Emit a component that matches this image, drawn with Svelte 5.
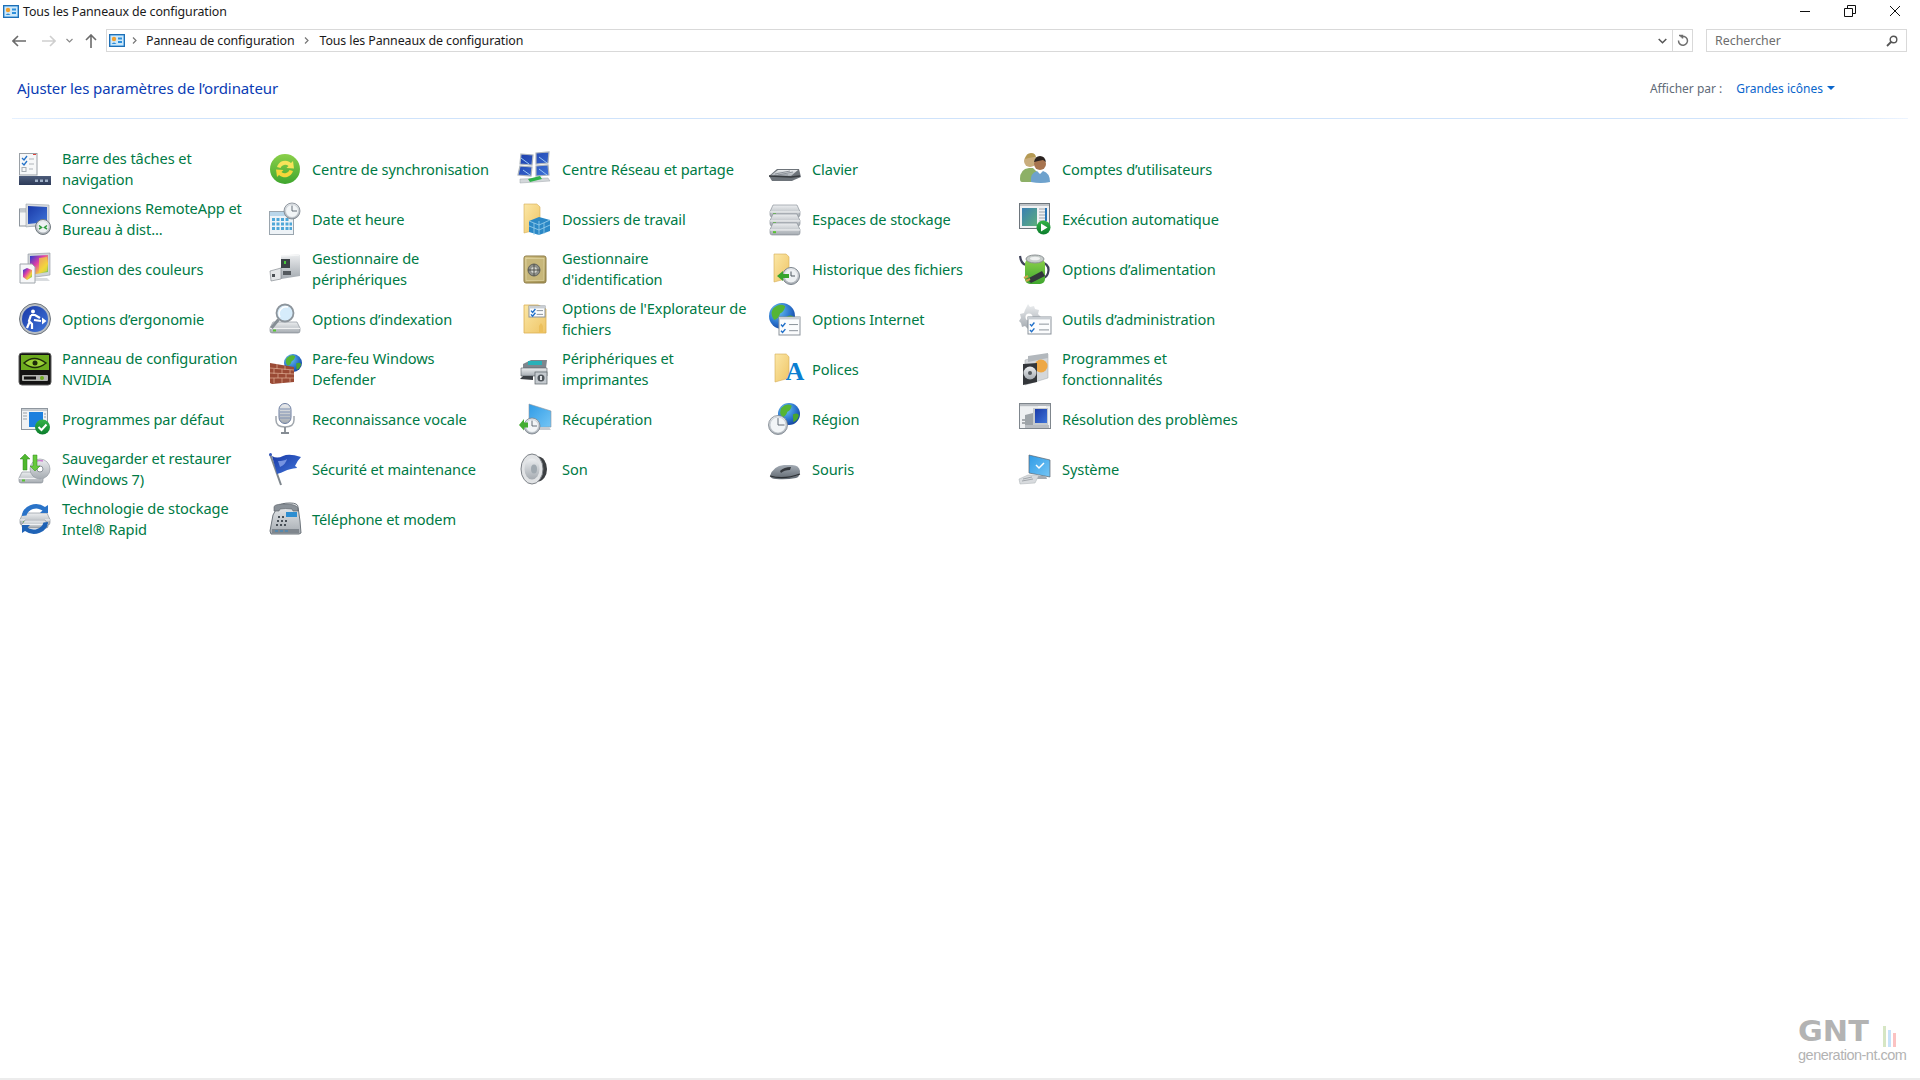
<script>
    // small svg pieces reused between icons
    const clock = (x, y, r) => `<circle cx="${x}" cy="${y}" r="${r}" fill="url(#steel)" stroke="#78828c" stroke-width=".8"/><circle cx="${x}" cy="${y}" r="${r - 1.6}" fill="#f2f5f7" stroke="#b4bcc4" stroke-width=".5"/><path d="M${x} ${y - r + 2.6}V${y}H${x + r - 3}" fill="none" stroke="#55606a" stroke-width=".9"/>`;
    const globe = (x, y, r) => `<circle cx="${x}" cy="${y}" r="${r}" fill="url(#earth)"/><path d="M${x - r * 0.7} ${y - r * 0.55}q${r * 0.5} ${-r * 0.5} ${r * 0.95} ${-r * 0.2}q${-r * 0.1} ${r * 0.45} ${-r * 0.4} ${r * 0.55}q${-r * 0.1} ${r * 0.4} ${-r * 0.45} ${r * 0.5}q${-r * 0.35} ${-r * 0.4} ${-r * 0.1} ${-r * 0.85}z" fill="#55b534"/><path d="M${x + r * 0.35} ${y + r * 0.05}q${r * 0.4} ${-r * 0.2} ${r * 0.55} ${r * 0.05}q${-r * 0.1} ${r * 0.5} ${-r * 0.5} ${r * 0.65}z" fill="#4aa52e"/>`;
    const checklist = (x, y, w, h) => `<rect x="${x}" y="${y}" width="${w}" height="${h}" fill="#fbfcfd" stroke="#8b939b"/><rect x="${x}" y="${y}" width="${w}" height="2.4" fill="#c9ced3"/><path d="M${x + 2} ${y + h * 0.42}l1.6 1.8 2.8-3.4M${x + 2} ${y + h * 0.76}l1.6 1.8 2.8-3.4" fill="none" stroke="#1f6fc9" stroke-width="1.4"/><path d="M${x + w * 0.48} ${y + h * 0.42}H${x + w - 2}M${x + w * 0.48} ${y + h * 0.76}H${x + w - 2}" stroke="#8b939b"/>`;
    const folder = (x, y, w, h) => `<path d="M${x} ${y}h${w * 0.8}l${w * 0.2} ${h * 0.1}V${y + h * 0.86}L${x} ${y + h}z" fill="url(#manila)" stroke="#d5ad55" stroke-width=".6"/>`;
    const drive = (x, y, w, h) => `<path d="M${x + 3} ${y}h${w - 6}l3 ${h * 0.55}v${h * 0.25}q0 ${h * 0.2} -2 ${h * 0.2}h${-w + 4}q-2 0 -2 ${-h * 0.2}v${-h * 0.25}z" fill="url(#steel)" stroke="#7c858d" stroke-width=".6"/><path d="M${x} ${y + h * 0.58}h${w}" stroke="#f6f7f8"/><rect x="${x + 3}" y="${y + h * 0.68}" width="3" height="2" fill="#58c334"/>`;

    const icons = {
        taskbar: `<rect x=".5" y=".5" width="17.5" height="21.5" fill="#f7f8f9" stroke="#9aa0a6"/><rect x="14" y="1" width="3" height="1" fill="#e0433a"/><path d="M3 5l2 2 3-4M3 10l2 2 3-4" fill="none" stroke="#2472c8" stroke-width="1.3"/><path d="M10 6h5M10 11h5M10 16h4" stroke="#b0b5ba"/><rect x="3" y="14.5" width="4" height="4" fill="none" stroke="#a7adb3"/><rect y="23" width="32" height="9" fill="url(#navy)"/><path d="M16 26.5h3v2.5h-3zM21 26.5h3v2.5h-3zM26 26.5h3v2.5h-3z" fill="#9fb0c8"/>`,
        sync: `<circle cx="16" cy="16" r="15" fill="url(#lime)"/><path d="M8 14a8.500 8.500 0 0 1 14-4l2-2 1 7.500-7.500-.5 2-2a5 5 0 0 0-8 2z" fill="#f6e35a"/><path d="M24 18a8.500 8.500 0 0 1-14 4l-2 2-1-7.500 7.500.5-2 2a5 5 0 0 0 8-2z" fill="#f6d63a"/>`,
        remote: `<rect x=".5" y="6" width="15" height="17" fill="#f5f6f7" stroke="#8e969e"/><rect x="1" y="6.500" width="14" height="3" fill="#c4c9ce"/><path d="M7 1l23 1v19l-23 3z" fill="#d7dbdf" stroke="#9ba2a9" stroke-width=".6"/><path d="M9 3l19 1v15l-19 2z" fill="url(#royal)"/><circle cx="24" cy="24" r="7.500" fill="url(#steel)" stroke="#70797f"/><circle cx="24" cy="24" r="5.500" fill="#eef1f3"/><path d="M20 22.500l2.500 2-2.500 1.500M28 22.500l-2.500 2 2.500 1.500" fill="none" stroke="#2f9c3d" stroke-width="1.5"/>`,
        colors: `<path d="M9 1l22-1v22l-22 3z" fill="#cfd3d7" stroke="#8f969d" stroke-width=".6"/><path d="M11 3l18-1v17l-18 3z" fill="url(#rainbow)"/><path d="M20 5l8-1v14l-8 2z" fill="#f4d83c" opacity=".7"/><path d="M14 25h14l3 3h-17z" fill="#d9dcdf"/><path d="M1 11h12l3 3v16h-15z" fill="#f6f7f8" stroke="#a0a6ac"/><path d="M4 17l4-2 5 2v7l-5 3-4-3z" fill="url(#rainbow)"/>`,
        date: `<rect x=".5" y="8.500" width="24" height="23" fill="#eef3f7" stroke="#9aa5ae"/><rect x="1" y="9" width="23" height="4" fill="#b9d6ea"/><path d="M3 15h3v3h-3zM7.500 15h3v3h-3zM12 15h3v3h-3zM16.500 15h3v3h-3zM3 19.500h3v3h-3zM7.500 19.500h3v3h-3zM12 19.500h3v3h-3zM16.500 19.500h3v3h-3zM20.500 19.500h2.500v3h-2.500zM3 24h3v3h-3zM7.500 24h3v3h-3zM12 24h3v3h-3zM16.500 24h3v3h-3zM20.500 24h2.500v3h-2.500z" fill="#4fa7d8"/>${clock(23, 8, 8)}`,
        devices: `<path d="M12 3l17-2 2 1v21l-19 3z" fill="url(#steel)"/><path d="M12 3l18-1" stroke="#f5f6f7" stroke-width="1.5"/><rect x="12" y="6" width="9" height="9" fill="#3c4246"/><rect x="15" y="8" width="2" height="3" fill="#47c93a"/><path d="M1 18l11-3v11l-10 2z" fill="#e4e6e8" stroke="#777e85" stroke-width=".6"/><rect x="3" y="21" width="3" height="3" fill="#4a4f54"/><rect x="14" y="18" width="8" height="4" fill="#54595e"/>`,
        access: `<circle cx="16" cy="16" r="15.500" fill="#b8bec4" stroke="#6f767d"/><circle cx="16" cy="16" r="13" fill="url(#royal)"/><circle cx="14" cy="8.500" r="2" fill="#fff"/><path d="M12 12h4l5 3M12 12l-2 6 3 3v5M11 18l-3 7M15 17l7 1" fill="none" stroke="#fff" stroke-width="2.200"/><path d="M23 14.500l4.500 3.500-4.500 3.500z" fill="#fff"/>`,
        index: `${drive(1, 19, 30, 11)}<circle cx="16" cy="10" r="8.500" fill="#d6ecfb" stroke="#8d959c" stroke-width="1.800"/><path d="M11 14a7 7 0 0 1 8-10" fill="none" stroke="#fff" stroke-width="1.500"/><path d="M9.500 16.500L2.500 25" stroke="#868e95" stroke-width="3"/>`,
        nvidia: `<rect width="32" height="32" rx="3" fill="#131313" stroke="#5c5c5c"/><path d="M2 2h28v15h-28z" fill="#6dab1e"/><path d="M5 10q10-9 22 0-11 9-22 0z" fill="#9ad036" stroke="#1d2a0a" stroke-width="1.500"/><circle cx="16" cy="10" r="2.500" fill="#1d2a0a"/><rect x="3" y="22" width="26" height="6" rx="1" fill="#b2b4b0"/><rect x="5" y="23.500" width="12" height="3" fill="#111"/><circle cx="23" cy="25" r="2" fill="#6dab1e"/>`,
        firewall: `${globe(24, 10, 9)}<path d="M1 10l24 4v15l-22 2-2-1z" fill="#9a4a35"/><path d="M1 15l24 2M1 20l24 1M1 25l24 0M8 11v5M16 13v4M5 16v5M13 16v5M21 17v4M9 21v4M17 21v4M5 25v5M13 25v5M21 25v4" stroke="#d9a68e" stroke-width=".8" fill="none"/>`,
        defaults: `<rect x="2.500" y="5.500" width="26" height="21" fill="#f0f2f4" stroke="#8f979f"/><rect x="3" y="6" width="25" height="2" fill="#c7ccd1"/><rect x="10" y="9" width="14" height="15" fill="#1c7fde"/><path d="M4 10h4M4 13h4M4 16h4M25 11h2M25 14h2" stroke="#9aa1a7"/><circle cx="23.500" cy="24" r="7.500" fill="url(#emerald)"/><path d="M19.500 24l3 3 5-5.500" fill="none" stroke="#fff" stroke-width="2"/>`,
        mic: `<rect x="10" y=".5" width="12" height="20" rx="6" fill="url(#steel)" stroke="#6b7da0"/><path d="M11 6h10M11 9h10M11 12h10M11 15h10" stroke="#7f90b3"/><path d="M7 13v4q0 7 9 7t9-7v-4" fill="none" stroke="#a1a7ad" stroke-width="1.500"/><path d="M16 24v5M12 30h8" stroke="#858c93" stroke-width="1.800"/>`,
        backup: `${drive(0, 19, 24, 11)}<circle cx="21" cy="16" r="10" fill="url(#steel)" stroke="#8a9198" stroke-width=".6"/><circle cx="21" cy="16" r="3" fill="#fff" stroke="#8a9198"/><path d="M16 9a9 9 0 0 1 8-1" stroke="#cc7fcf" stroke-width="1.500" fill="none"/><path d="M6 1l5 5h-3v11h-4v-11h-3z" fill="#4fb82e" stroke="#2e8a1e" stroke-width=".5"/><path d="M16 18l-5-5h3v-11h4v11h3z" fill="#67c93c" stroke="#2e8a1e" stroke-width=".5"/>`,
        intel: `${drive(1, 10, 30, 12)}${drive(3, 17, 26, 8)}<path d="M3 13a14 12 0 0 1 23-9l3-2v8h-8l2.500-2.500a10 9 0 0 0-16 5z" fill="#2a73c8"/><path d="M29 19a14 12 0 0 1-23 9l-3 2v-8h8l-2.500 2.500a10 9 0 0 0 16-5z" fill="#1f63b6"/>`,
        network: `<path d="M2 1l12 1-1 10-12-1zM17 0l13-1-1 11-12 1zM1 13l12 1-1 9-13-1zM17 13l12-1 1 10-13 1z" fill="url(#royal)" stroke="#aeb5bc" stroke-width="1.200"/><path d="M2 5l8 6M20 4l8 6M4 17l7 5M20 16l8 6" stroke="#9ac8f5" stroke-width="1"/><path d="M1 26l28-1 2 3-30 2z" fill="#d3d7da" stroke="#9ea5ab" stroke-width=".5"/><path d="M9 26l12-3 2 3-12 3z" fill="#2fb24a"/>`,
        keyboard: `<path d="M0 23l8-7h22l2 8-7 3-2 1h-20z" fill="#6e747a"/><path d="M1 23l8-6h20l-7 6z" fill="url(#steel)"/><path d="M6 21l15-3M9 22l15-3M5 22.500l14-.5" stroke="#8c9299"/><path d="M0 23l22 1 9-1" stroke="#383c40" stroke-width="1.500" fill="none"/>`,
        work: `${folder(5, 1, 16, 29)}<path d="M10 18l10-4 11 3v11l-11 4-10-3z" fill="#2b88c6"/><path d="M20 18v14M10 18l10 4 11-5M10 23l10 4 11-5M15 20v12M25 20v11" stroke="#9ad0ee" stroke-width=".8" fill="none"/>`,
        storage: `${drive(1, 2, 30, 12)}${drive(1, 11, 30, 12)}${drive(1, 20, 30, 12)}`,
        safe: `<rect x="5" y="3" width="22" height="27" rx="2" fill="url(#brass)" stroke="#8c7a45"/><rect x="7" y="5.500" width="18" height="22" fill="#c7b77a" stroke="#e7dcae" stroke-width=".6"/><circle cx="15" cy="17" r="6" fill="#8e908a" stroke="#5f6059"/><circle cx="15" cy="17" r="3" fill="#d7d8d2"/><path d="M15 11v12M9 17h12" stroke="#4f504b"/>`,
        history: `${folder(5, 1, 15, 28)}<circle cx="22" cy="23" r="8.500" fill="url(#steel)" stroke="#7a838b"/><circle cx="22" cy="23" r="6.500" fill="#eef1f3"/><path d="M22 18.500v4.500h4" fill="none" stroke="#4d565e"/><path d="M8 23l6-5v3h6v4h-6v3z" fill="#37a52e"/>`,
        explorer: `<path d="M5 2h14l8 4v24h-22z" fill="url(#manila)" stroke="#dcb054" stroke-width=".8"/><path d="M20 30v-7l2-3 2 3v7z" fill="#ecc05c"/>${checklist(10, 3, 16, 11)}`,
        internet: `${globe(13, 13, 13)}${checklist(10, 14, 21, 18)}`,
        fonts: `${folder(6, 1, 14, 28)}<text x="26" y="27" text-anchor="middle" font-family="'Liberation Serif',serif" font-weight="700" font-size="26" fill="#0b7fd1">A</text>`,
        region: `${globe(20, 11, 11)}${clock(9, 22, 9.500)}`,
        speaker: `<ellipse cx="19" cy="16" rx="9" ry="12.500" fill="#3b3e41"/><ellipse cx="13" cy="16" rx="11" ry="15" fill="#e1e3e5" stroke="#7c8187"/><ellipse cx="13" cy="16" rx="7.500" ry="10.500" fill="url(#steel)"/><ellipse cx="15" cy="16" rx="3" ry="4.500" fill="#a0a9b0"/>`,
        mouse: `<path d="M1 23q3-10 14-11h8q7 0 8 6 0 6-4 7-10 2-20 1-5 0-6-3z" fill="url(#slate)"/><path d="M11 18q4-4 11-4l-1 3q-6 0-9 3z" fill="#34383d"/><path d="M1 23q14 4 30-2" stroke="#2d3135" stroke-width="1.200" fill="none"/>`,
        printers: `<path d="M4 11l8-4h16l-1 8h-23z" fill="#7e868d"/><path d="M9 8h14v4h-14z" fill="#28b0b8"/><path d="M2 15h26v8h-26z" fill="url(#steel)" stroke="#555c62" stroke-width=".6"/><path d="M4 23l-3 3 13 1v-4z" fill="#3b3f44"/><rect x="16" y="19" width="12" height="12" fill="#c4c9ce" stroke="#5a6167" stroke-width=".7"/><circle cx="22" cy="25" r="3.500" fill="#4f555b"/><rect x="21" y="23" width="2" height="4" fill="#dfe2e4"/>`,
        recovery: `<path d="M10 1l22 7v16l-22 1z" fill="url(#sky)" stroke="#8d969d" stroke-width=".6"/><path d="M20 24h10l2 3h-12z" fill="#c7cbd0"/>${clock(13, 23, 8)}<path d="M0 22l5-6v3.500h4v5h-4v3z" fill="#43ad31"/>`,
        trouble: `<rect x=".5" y=".5" width="31" height="25" fill="#eef0f2" stroke="#7f868d"/><rect x="1" y="1" width="30" height="2.200" fill="#b8bcc1"/><path d="M19 3h8v3h-8z" fill="#f4f5f6"/><path d="M14 5l15 0v17h-15z" fill="#c6cacd"/><path d="M16 6h12v14h-12z" fill="url(#royal)"/><path d="M6 12l8-2v14h-8z" fill="#9da3a8"/><path d="M3 17h3M3 20h3" stroke="#60666c"/><path d="M6 22h24v3h-24z" fill="#b9bdc2"/>`,
        flag: `<path d="M1 1l11 31" stroke="#7e868d" stroke-width="2"/><circle cx="1.500" cy="1.500" r="1.500" fill="#3458c0"/><path d="M3 3q5 3 11 0t18 1q-4 4-6 9 2 1 2 2-8 1-12 3t-8 3z" fill="url(#royal)"/><path d="M9 8q6 0 9-2-1 5-7 8z" fill="#8aa5ea" opacity=".8"/>`,
        users: `<circle cx="11" cy="8" r="6" fill="#c9ad7d"/><path d="M6 6q1-6 6-6t5 5l-2-1q-6 1-9 2z" fill="#b59a54"/><path d="M1 26q0-10 9-11h4l4 4v10l-15 0q-2 0-2-3z" fill="#8db067"/><circle cx="21" cy="11" r="6" fill="#a7744f"/><path d="M15 9q1-6 6-6t6 6l-3-2q-5 1-9 2z" fill="#2b2320"/><path d="M12 29q-1-9 6-11l3 3 3-3q7 2 7 11-9 2-19 0z" fill="#6ea2cd"/>`,
        autoplay: `<rect x=".5" y=".5" width="30" height="25" fill="#f0f1f3" stroke="#6d757c"/><rect x="1" y="1" width="29" height="2" fill="#bfc3c7"/><rect x="3" y="5" width="15" height="18" fill="url(#teal)"/><path d="M20 6h6M20 9h6M20 12h6M20 15h6M20 18h6" stroke="#9ea4aa"/><rect x="26" y="5" width="2" height="13" fill="#2775b8"/><circle cx="24.500" cy="24.500" r="7" fill="url(#emerald)"/><path d="M22 20.500l6.500 4-6.500 4z" fill="#fff"/>`,
        power: `<path d="M1 3q1 8 6 9M25 10q6 3 4 10-1 4-5 5" fill="none" stroke="#3e4158" stroke-width="2.200"/><rect x="6" y="6" width="20" height="25" rx="5" fill="url(#lime)"/><ellipse cx="16" cy="6" rx="9" ry="4" fill="#c6ccca" stroke="#8c9294"/><ellipse cx="16" cy="5.500" rx="5" ry="1.800" fill="#eff1f1"/><path d="M8 26l15-8 3 5-14 7z" fill="#33373b"/><path d="M5 25l4-2M7 28l4-2" stroke="#c9a34a" stroke-width="2"/>`,
        admin: `<path d="M9 1l2 3 4-1 1 3 4 1-1 4 3 3-3 3 1 4-4 1-1 3-4-1-2 2-3-3-3 1-1-4-2-2 2-3-1-4 4-1 1-3z" fill="url(#steel)"/><circle cx="10" cy="14" r="3.500" fill="#fff"/>${checklist(9, 14, 23, 17)}`,
        programs: `<path d="M6 7l23-6v24l-23 7z" fill="#d4d7da" stroke="#a0a6ab" stroke-width=".5"/><path d="M9 3l20-3v5l-20 4z" fill="#b3b8bd"/><circle cx="22" cy="13" r="6.500" fill="#eea846"/><path d="M4 11l14-1v19l-14 3z" fill="#33363a"/><circle cx="11" cy="20" r="6.500" fill="url(#steel)"/><circle cx="11" cy="20" r="2" fill="#54595e"/>`,
        system: `<path d="M10 2l21 5v17l-21-4z" fill="url(#sky)" stroke="#5c6670" stroke-width=".7"/><path d="M17 12l3 3 5-5" fill="none" stroke="#fff" stroke-width="1.500"/><path d="M19 23l-1 3h10l-1-3z" fill="#a6acb2"/><path d="M0 26l9-4h11l-4 8-15 1z" fill="#d8dbde" stroke="#a9aeb3" stroke-width=".5"/><path d="M4 26l9-2M3 28l11-2" stroke="#a2a7ac"/>`,
        phone: `<path d="M4 12l5-9q3-3 12-3 8 0 8 4l2 14 1 12-2 1h-28l-1-3z" fill="url(#steel)" stroke="#6d747b"/><path d="M5 4q0-3 11-3t13 4v3h-5l-1-2q-7-1-12 0l-1 2h-5z" fill="#8a9198" stroke="#596067" stroke-width=".6"/><rect x="17" y="9" width="11" height="5" fill="#2e8ed1"/><path d="M9 13h2v2h-2zM13 13h2v2h-2zM8 17h2v2h-2zM12 17h2v2h-2zM16 17h2v2h-2zM7 21h2v2h-2zM11 21h2v2h-2zM15 21h2v2h-2z" fill="#495057"/><path d="M3 26h27v4h-27z" fill="#7f868d"/><path d="M6 28h3M11 28h3M16 28h3" stroke="#2d89cc"/>`,
    };

    const items = [
        ['taskbar', 'Barre des tâches et\nnavigation'], ['sync', 'Centre de synchronisation'], ['network', 'Centre Réseau et partage'], ['keyboard', 'Clavier'], ['users', 'Comptes d’utilisateurs'],
        ['remote', 'Connexions RemoteApp et\nBureau à dist...'], ['date', 'Date et heure'], ['work', 'Dossiers de travail'], ['storage', 'Espaces de stockage'], ['autoplay', 'Exécution automatique'],
        ['colors', 'Gestion des couleurs'], ['devices', 'Gestionnaire de\npériphériques'], ['safe', "Gestionnaire\nd'identification"], ['history', 'Historique des fichiers'], ['power', 'Options d’alimentation'],
        ['access', 'Options d’ergonomie'], ['index', 'Options d’indexation'], ['explorer', "Options de l'Explorateur de\nfichiers"], ['internet', 'Options Internet'], ['admin', 'Outils d’administration'],
        ['nvidia', 'Panneau de configuration\nNVIDIA'], ['firewall', 'Pare-feu Windows\nDefender'], ['printers', 'Périphériques et\nimprimantes'], ['fonts', 'Polices'], ['programs', 'Programmes et\nfonctionnalités'],
        ['defaults', 'Programmes par défaut'], ['mic', 'Reconnaissance vocale'], ['recovery', 'Récupération'], ['region', 'Région'], ['trouble', 'Résolution des problèmes'],
        ['backup', 'Sauvegarder et restaurer\n(Windows 7)'], ['flag', 'Sécurité et maintenance'], ['speaker', 'Son'], ['mouse', 'Souris'], ['system', 'Système'],
        ['intel', 'Technologie de stockage\nIntel® Rapid'], ['phone', 'Téléphone et modem'],
    ];
</script>

<svg class="defs" width="0" height="0" aria-hidden="true">
    <defs>
        <linearGradient id="steel" x1="0" y1="0" x2="0" y2="1"><stop offset="0" stop-color="#eceef0"/><stop offset="1" stop-color="#a5abb1"/></linearGradient>
        <linearGradient id="navy" x1="0" y1="0" x2="0" y2="1"><stop offset="0" stop-color="#4d5c7a"/><stop offset="1" stop-color="#2c3a58"/></linearGradient>
        <linearGradient id="royal" x1="0" y1="0" x2="1" y2="1"><stop offset="0" stop-color="#1a3aa8"/><stop offset="1" stop-color="#3f74d8"/></linearGradient>
        <linearGradient id="sky" x1="0" y1="0" x2="1" y2="1"><stop offset="0" stop-color="#2f9be6"/><stop offset="1" stop-color="#76c6f5"/></linearGradient>
        <linearGradient id="teal" x1="0" y1="0" x2="1" y2="1"><stop offset="0" stop-color="#3a7fb3"/><stop offset="1" stop-color="#5cae7c"/></linearGradient>
        <linearGradient id="lime" x1="0" y1="0" x2="0" y2="1"><stop offset="0" stop-color="#8bd04a"/><stop offset="1" stop-color="#3fa62e"/></linearGradient>
        <linearGradient id="emerald" x1="0" y1="0" x2="0" y2="1"><stop offset="0" stop-color="#35b348"/><stop offset="1" stop-color="#0b7d2c"/></linearGradient>
        <linearGradient id="manila" x1="0" y1="0" x2="1" y2="1"><stop offset="0" stop-color="#fbe7a6"/><stop offset="1" stop-color="#efc566"/></linearGradient>
        <linearGradient id="brass" x1="0" y1="0" x2="1" y2="1"><stop offset="0" stop-color="#d9c88a"/><stop offset="1" stop-color="#a08f52"/></linearGradient>
        <linearGradient id="slate" x1="0" y1="0" x2="0" y2="1"><stop offset="0" stop-color="#a4acb5"/><stop offset="1" stop-color="#5f676f"/></linearGradient>
        <linearGradient id="rainbow" x1="0" y1="0" x2="1" y2="1"><stop offset="0" stop-color="#1c3fd0"/><stop offset=".4" stop-color="#e03fa8"/><stop offset=".7" stop-color="#f2d13a"/><stop offset="1" stop-color="#47c46a"/></linearGradient>
        <radialGradient id="earth" cx=".35" cy=".3" r=".8"><stop offset="0" stop-color="#6cc4f2"/><stop offset=".6" stop-color="#2a72cc"/><stop offset="1" stop-color="#123d96"/></radialGradient>
    </defs>
</svg>

{#snippet panelIcon()}
    <svg width="16" height="13" viewBox="0 0 16 13">
        <rect x=".5" y=".5" width="15" height="12" fill="#2d8fdc" stroke="#1f6fb5"/>
        <rect x="1.500" y="1.500" width="13" height="10" fill="#cfe8f8"/>
        <circle cx="5" cy="5" r="2.200" fill="#f0a030"/>
        <path d="M2.500 10q2.500-3 5 0z" fill="#2d8fdc"/>
        <path d="M9 3.500h4v2h-4zM9 7h4v2h-4z" fill="#2d8fdc"/>
    </svg>
{/snippet}

<div class="window">
    <header class="titlebar">
        <span class="title-icon">{@render panelIcon()}</span>
        <span class="title">Tous les Panneaux de configuration</span>
        <div class="win-buttons">
            <svg width="12" height="12" viewBox="0 0 12 12"><path d="M1 6.500h10" stroke="#111"/></svg>
            <svg width="12" height="12" viewBox="0 0 12 12"><path d="M.5 3.500h8v8h-8zM3.500 3.500v-3h8v8h-3" fill="none" stroke="#111"/></svg>
            <svg width="12" height="12" viewBox="0 0 12 12"><path d="M1 1l10 10M11 1l-10 10" stroke="#111"/></svg>
        </div>
    </header>

    <div class="toolbar">
        <div class="nav">
            <svg class="back" width="14" height="12" viewBox="0 0 14 12"><path d="M6 1l-5 5 5 5M1 6h13" fill="none" stroke="#6b6b6b" stroke-width="1.600"/></svg>
            <svg class="forward" width="14" height="12" viewBox="0 0 14 12"><path d="M8 1l5 5-5 5M13 6h-13" fill="none" stroke="#cfcfcf" stroke-width="1.600"/></svg>
            <svg class="recent" width="7" height="5" viewBox="0 0 7 5"><path d="M.5 1l3 3 3-3" fill="none" stroke="#8a8a8a" stroke-width="1.200"/></svg>
            <svg class="up" width="12" height="14" viewBox="0 0 12 14"><path d="M1 6l5-5 5 5M6 1v13" fill="none" stroke="#6b6b6b" stroke-width="1.600"/></svg>
        </div>
        <div class="address">
            <span class="addr-icon">{@render panelIcon()}</span>
            <svg class="crumb-sep first" width="5" height="7" viewBox="0 0 5 7"><path d="M1 .5l3 3-3 3" fill="none" stroke="#777" stroke-width="1.200"/></svg>
            <span class="crumb">Panneau de configuration</span>
            <svg class="crumb-sep" width="5" height="7" viewBox="0 0 5 7"><path d="M1 .5l3 3-3 3" fill="none" stroke="#777" stroke-width="1.200"/></svg>
            <span class="crumb">Tous les Panneaux de configuration</span>
            <span class="addr-drop">
                <svg width="9" height="6" viewBox="0 0 9 6"><path d="M.7 1l3.800 3.800 3.800-3.800" fill="none" stroke="#555" stroke-width="1.500"/></svg>
            </span>
            <span class="addr-refresh">
                <svg width="12" height="13" viewBox="0 0 12 13"><path d="M3.500 3a4.500 4.500 0 1 1-2 3.500M2 1.500h3.500v3" fill="none" stroke="#6f6f6f" stroke-width="1.500"/></svg>
            </span>
        </div>
        <div class="search">
            <span>Rechercher</span>
            <svg width="12" height="12" viewBox="0 0 12 12"><circle cx="7.500" cy="4.500" r="3.300" fill="none" stroke="#555" stroke-width="1.400"/><path d="M5 7l-4 4" stroke="#555" stroke-width="1.800"/></svg>
        </div>
    </div>

    <div class="heading">
        <h1>Ajuster les paramètres de l’ordinateur</h1>
        <div class="view-by">
            <span class="view-label">Afficher par :</span>
            <span class="view-value">Grandes icônes</span>
            <span class="view-arrow"></span>
        </div>
    </div>
    <div class="rule"></div>

    <main class="grid">
        {#each items as [icon, label]}
            <div class="item">
                <svg class="icon" width="32" height="32" viewBox="0 0 32 32">{@html icons[icon]}</svg>
                <span class="label">{label}</span>
            </div>
        {/each}
    </main>

    <div class="statusline"></div>

    <div class="watermark">
        <div class="gnt-row">
            <span class="gnt">GNT</span>
            <span class="bars"><i class="b1"></i><i class="b2"></i><i class="b3"></i></span>
        </div>
        <div class="gnt-site">generation-nt.com</div>
    </div>
</div>

<style>
    :global(body) {
        margin: 0;
        background: #fff;
    }

    .defs {
        display: block;
    }

    .window {
        position: relative;
        display: flex;
        flex-direction: column;
        height: 1080px;
        overflow: hidden;
        font-family: 'Noto Sans', 'Open Sans', sans-serif;
        color: #1a1a1a;
    }

    .titlebar {
        display: flex;
        align-items: center;
        height: 22px;
        padding-left: 3px;
        flex: none;
    }

    .title-icon,
    .addr-icon {
        display: flex;
    }

    .title {
        margin-left: 4px;
        font-size: 12.4px;
        letter-spacing: -0.1px;
    }

    .win-buttons {
        display: flex;
        gap: 33px;
        margin-left: auto;
        margin-right: 19px;
    }

    .toolbar {
        display: flex;
        align-items: stretch;
        height: 23px;
        margin-top: 7px;
        flex: none;
    }

    .nav {
        display: flex;
        align-items: center;
        width: 106px;
        flex: none;
        box-sizing: border-box;
        padding-left: 12px;
    }

    .forward {
        margin-left: 16px;
    }

    .recent {
        margin-left: 10px;
    }

    .up {
        margin-left: 12px;
    }

    .address {
        display: flex;
        align-items: center;
        width: 1587px;
        box-sizing: border-box;
        border: 1px solid #d9d9d9;
        padding-left: 2px;
        font-size: 12.4px;
        letter-spacing: -0.1px;
    }

    .crumb-sep {
        margin: 0 11px 0 9px;
    }

    .crumb-sep.first {
        margin: 0 9px 0 7px;
    }

    .addr-drop {
        display: flex;
        align-items: center;
        justify-content: center;
        margin-left: auto;
        width: 20px;
        height: 100%;
        border-right: 1px solid #d9d9d9;
    }

    .addr-refresh {
        display: flex;
        align-items: center;
        justify-content: center;
        width: 19px;
    }

    .search {
        display: flex;
        align-items: center;
        justify-content: space-between;
        width: 201px;
        box-sizing: border-box;
        margin-left: 13px;
        padding: 0 8px 0 8px;
        border: 1px solid #d9d9d9;
        font-size: 12.4px;
        color: #6d6d6d;
    }

    .heading {
        display: flex;
        align-items: center;
        justify-content: space-between;
        box-sizing: border-box;
        height: 66px;
        padding: 6px 0 0 17px;
        flex: none;
    }

    h1 {
        margin: 0;
        font-size: 15px;
        font-weight: 400;
        letter-spacing: -0.1px;
        color: #0a3cb4;
    }

    .view-by {
        display: flex;
        align-items: center;
        font-size: 12px;
        margin-right: 85px;
    }

    .view-label {
        color: #5f6b78;
    }

    .view-value {
        margin-left: 14px;
        color: #0a66cc;
    }

    .view-arrow {
        margin-left: 4px;
        border-left: 4px solid transparent;
        border-right: 4px solid transparent;
        border-top: 4px solid #0a66cc;
    }

    .rule {
        height: 1px;
        margin: 0 12px;
        background: linear-gradient(90deg, #e6f1ff, #cfe3fb 4%, #cfe3fb 96%, #eef5ff);
        flex: none;
    }

    .grid {
        display: grid;
        grid-template-columns: repeat(5, 250px);
        grid-auto-rows: 50px;
        margin-top: 25px;
        padding-left: 19px;
    }

    .item {
        display: flex;
        align-items: center;
        gap: 11px;
    }

    .icon {
        flex: none;
        overflow: visible;
    }

    .label {
        font-size: 14.6px;
        line-height: 21px;
        letter-spacing: -0.1px;
        color: #007a45;
        white-space: pre-line;
    }

    .statusline {
        height: 2px;
        margin-top: auto;
        background: #ececec;
        flex: none;
    }

    /* site watermark lies over the page */
    .watermark {
        position: absolute;
        left: 1798px;
        top: 1017px;
        color: #b3b3b3;
    }

    .gnt-row {
        display: flex;
        align-items: flex-end;
        height: 30px;
    }

    .gnt {
        display: inline-block;
        width: 80px;
        font-family: 'DejaVu Sans', sans-serif;
        font-weight: 700;
        font-size: 28px;
        line-height: 30px;
        transform: scaleX(1.08);
        transform-origin: left;
    }

    .bars {
        display: flex;
        align-items: flex-end;
        gap: 2px;
        margin-left: 5px;
    }

    .bars i {
        display: block;
        width: 3px;
    }

    .b1 {
        height: 21px;
        background: #d6e6c4;
    }

    .b2 {
        height: 17px;
        background: #c6e2fa;
    }

    .b3 {
        height: 14px;
        background: #fbc2c2;
    }

    .gnt-site {
        font-family: 'Liberation Sans', sans-serif;
        font-size: 14.5px;
        line-height: 16px;
        letter-spacing: -0.5px;
    }
</style>
